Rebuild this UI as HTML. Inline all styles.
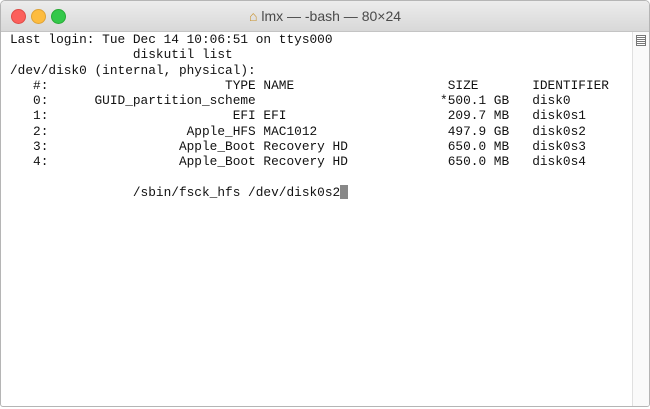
<!DOCTYPE html>
<html><head><style>
html,body{margin:0;padding:0;width:650px;height:409px;overflow:hidden;background:#fff}
.win{position:absolute;left:0;top:0;width:648px;height:405px;border:1px solid #b5b5b5;border-radius:5px 5px 3px 3px;overflow:hidden;background:#fff}
.tb{position:absolute;left:0;top:0;width:100%;height:30px;background:linear-gradient(#ececec,#d8d8d8);border-bottom:1px solid #c4c4c4}
.dot{position:absolute;top:8px;width:13px;height:13px;border-radius:50%}
.title{position:absolute;top:7px;left:0;width:100%;text-align:center;font:14px "Liberation Sans",sans-serif;color:#4a4a4a}
pre{position:absolute;left:9px;top:31px;margin:0;font:12.8px/15.3px "Liberation Mono",monospace;color:#111}
.sb{position:absolute;right:0;top:31px;width:16px;bottom:0;border-left:1px solid #e0e0e0;background:#fafafa}
.cur{display:inline-block;width:8px;height:14px;background:#888;vertical-align:-3px}
</style></head><body>
<div class="win">
<div class="tb">
<div class="dot" style="left:10px;background:#fc605c;border:0.5px solid #de4b46"></div>
<div class="dot" style="left:30px;background:#fdbc40;border:0.5px solid #dea236"></div>
<div class="dot" style="left:50px;background:#34c84a;border:0.5px solid #27aa35"></div>
<div class="title"><span style="color:#c8902a">&#8962;</span> lmx — -bash — 80×24</div>
</div>
<pre>Last login: Tue Dec 14 10:06:51 on ttys000
                diskutil list
/dev/disk0 (internal, physical):
   #:                       TYPE NAME                    SIZE       IDENTIFIER
   0:      GUID_partition_scheme                        *500.1 GB   disk0
   1:                        EFI EFI                     209.7 MB   disk0s1
   2:                  Apple_HFS MAC1012                 497.9 GB   disk0s2
   3:                 Apple_Boot Recovery HD             650.0 MB   disk0s3
   4:                 Apple_Boot Recovery HD             650.0 MB   disk0s4

                /sbin/fsck_hfs /dev/disk0s2<span class="cur"></span></pre>
<div class="sb"><div style="position:absolute;left:3px;top:3px;width:8px;height:9px;border:1px solid #777;background:repeating-linear-gradient(#fff 0 1px,#777 1px 2px)"></div></div>
</div>
</body></html>
